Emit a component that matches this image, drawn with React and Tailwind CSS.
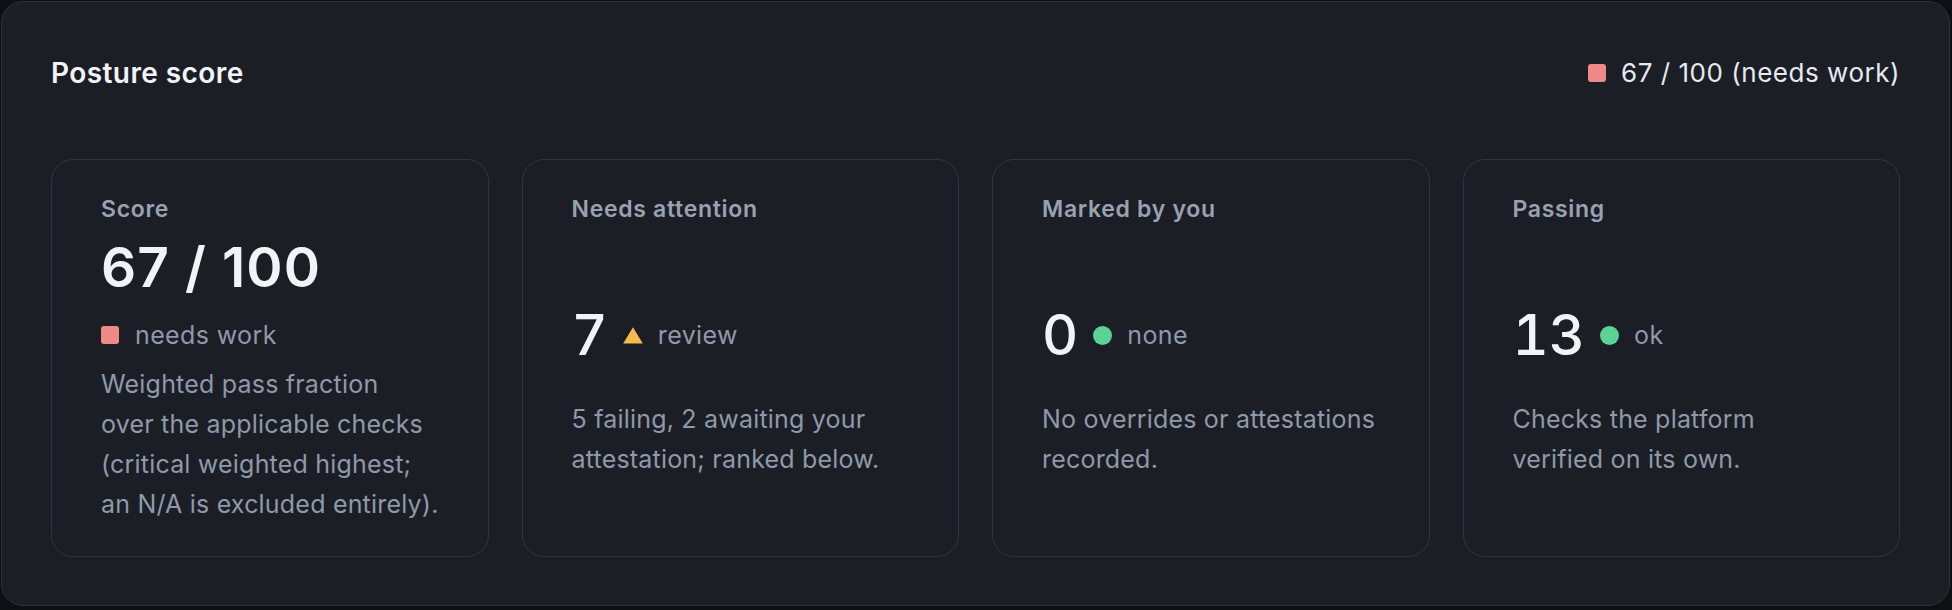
import React from "react";

function Square() {
  return <span className="inline-block w-[18px] h-[18px] rounded-[3px] bg-[#f08a87] shrink-0" />;
}

function Dot() {
  return <span className="inline-block w-[19px] h-[19px] rounded-full bg-[#5cd396] shrink-0" />;
}

function Triangle() {
  return (
    <svg width="20" height="17" viewBox="0 0 20 17" className="shrink-0">
      <polygon points="10,0.3 19.8,16.6 0.2,16.6" fill="#f2bc4e" />
    </svg>
  );
}

function Card({ children }) {
  return (
    <div className="h-[398px] rounded-[22px] border border-[#30353e] pl-[49px] pr-[16px] pt-[34px]">
      {children}
    </div>
  );
}

function Label({ children }) {
  return (
    <div className="text-[23px] leading-[31px] font-semibold tracking-[0.03em] text-[#99a2b1] whitespace-nowrap">
      {children}
    </div>
  );
}

function Desc({ lines, className }) {
  return (
    <div className={"text-[25px] leading-[40px] tracking-[0.008em] text-[#8f99a9] whitespace-nowrap " + className}>
      {lines.map((l, i) => (
        <div key={i}>{l}</div>
      ))}
    </div>
  );
}

function StatCard({ label, value, icon, status, lines }) {
  return (
    <Card>
      <Label>{label}</Label>
      <div className="mt-[78px] flex items-center h-[64px]">
        <span className="text-[56px] leading-[64px] font-medium tabular-nums text-[#f1f3f7]">{value}</span>
        <span className="ml-[15px] flex items-center">{icon}</span>
        <span className="ml-[15px] text-[25px] leading-[40px] tracking-[0.015em] text-[#8f99a9]">{status}</span>
      </div>
      <Desc lines={lines} className="mt-[32px]" />
    </Card>
  );
}

export default function App() {
  return (
    <div
      className="w-[1952px] h-[610px] bg-[#0d0f13] p-px"
      style={{ fontFamily: "Inter, 'Noto Sans', sans-serif" }}
    >
      <div className="w-[1949px] h-[605px] rounded-[22px] border border-[#2d323b] bg-[#1b1e25] px-[49px] pt-[51px]">
        <div className="flex items-center justify-between h-[40px]">
          <div className="text-[28px] leading-[38px] font-semibold tracking-[0.015em] text-[#f1f3f6]">Posture score</div>
          <div className="flex items-center gap-[15px]">
            <Square />
            <span className="text-[26px] leading-[40px] tracking-[0.02em] text-[#e6e9ee]">67 / 100 (needs work)</span>
          </div>
        </div>
        <div className="mt-[66px] grid grid-cols-4 gap-[33px]">
          <Card>
            <Label>Score</Label>
            <div className="mt-[10px] text-[55px] leading-[64px] font-semibold tracking-[0.02em] text-[#f1f3f7] whitespace-nowrap">
              67 / 100
            </div>
            <div className="mt-[16px] flex items-center gap-[16px] h-[40px]">
              <Square />
              <span className="text-[25px] leading-[40px] tracking-[0.015em] text-[#8f99a9]">needs work</span>
            </div>
            <Desc
              className="mt-[9px]"
              lines={[
                "Weighted pass fraction",
                "over the applicable checks",
                "(critical weighted highest;",
                "an N/A is excluded entirely).",
              ]}
            />
          </Card>
          <StatCard
            label="Needs attention"
            value="7"
            icon={<Triangle />}
            status="review"
            lines={["5 failing, 2 awaiting your", "attestation; ranked below."]}
          />
          <StatCard
            label="Marked by you"
            value="0"
            icon={<Dot />}
            status="none"
            lines={["No overrides or attestations", "recorded."]}
          />
          <StatCard
            label="Passing"
            value="13"
            icon={<Dot />}
            status="ok"
            lines={["Checks the platform", "verified on its own."]}
          />
        </div>
      </div>
    </div>
  );
}
